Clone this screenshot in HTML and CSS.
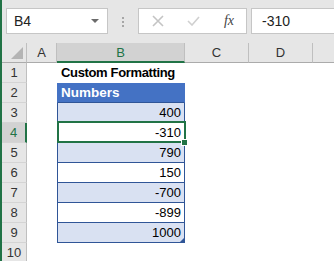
FILE: index.html
```html
<!DOCTYPE html>
<html lang="en">
<head>
  <meta charset="UTF-8">
  <title>Custom Formatting</title>
  <link rel="stylesheet" href="styles.css">
</head>
<body>
  <div class="formula-bar">
    <div class="name-box">
      <span>B4</span>
      <svg class="drop" width="8" height="5" viewBox="0 0 8 5"><path d="M0 0H8L4 4Z" fill="#6b6b6b"/></svg>
    </div>
    <div class="grip"><i></i><i></i><i></i></div>
    <div class="func-box">
      <svg width="12" height="12" viewBox="0 0 12 12"><path d="M1 1L11 11M11 1L1 11" stroke="#c4c4c4" stroke-width="1.6"/></svg>
      <svg width="13" height="10" viewBox="0 0 13 10"><path d="M1 5L5 9L12 1" stroke="#d0d0d0" stroke-width="1.6" fill="none"/></svg>
      <span class="fx">fx</span>
    </div>
    <div class="value-box">-310</div>
  </div>

  <div class="sheet">
    <div class="corner"><span class="tri"></span></div>
    <div class="col-head">A</div>
    <div class="col-head active">B</div>
    <div class="col-head">C</div>
    <div class="col-head">D</div>
    <div class="col-head last"></div>

    <div class="row-head">1</div>
    <div class="cell"></div>
    <div class="cell title">Custom Formatting</div>
    <div class="cell"></div><div class="cell"></div><div class="cell"></div>

    <div class="row-head">2</div>
    <div class="cell"></div>
    <div class="cell tbl head">Numbers</div>
    <div class="cell"></div><div class="cell"></div><div class="cell"></div>

    <div class="row-head">3</div>
    <div class="cell"></div>
    <div class="cell tbl band">400</div>
    <div class="cell"></div><div class="cell"></div><div class="cell"></div>

    <div class="row-head active">4</div>
    <div class="cell"></div>
    <div class="cell tbl selected">-310<span class="handle"></span></div>
    <div class="cell"></div><div class="cell"></div><div class="cell"></div>

    <div class="row-head">5</div>
    <div class="cell"></div>
    <div class="cell tbl band">790</div>
    <div class="cell"></div><div class="cell"></div><div class="cell"></div>

    <div class="row-head">6</div>
    <div class="cell"></div>
    <div class="cell tbl">150</div>
    <div class="cell"></div><div class="cell"></div><div class="cell"></div>

    <div class="row-head">7</div>
    <div class="cell"></div>
    <div class="cell tbl band">-700</div>
    <div class="cell"></div><div class="cell"></div><div class="cell"></div>

    <div class="row-head">8</div>
    <div class="cell"></div>
    <div class="cell tbl">-899</div>
    <div class="cell"></div><div class="cell"></div><div class="cell"></div>

    <div class="row-head">9</div>
    <div class="cell"></div>
    <div class="cell tbl band end">1000<span class="resize"></span></div>
    <div class="cell"></div><div class="cell"></div><div class="cell"></div>

    <div class="row-head">10</div>
    <div class="cell"></div><div class="cell"></div>
    <div class="cell"></div><div class="cell"></div><div class="cell"></div>
  </div>
</body>
</html>
```

FILE: styles.css
```css
body {
  margin: 0;
  width: 332px;
  height: 261px;
  overflow: hidden;
  border-left: 2px solid #217346;
  background-color: #fff;
  font-family: "Liberation Sans", Arial, sans-serif;
  font-size: 13px;
  color: #000;
}
.formula-bar {
  display: flex;
  align-items: flex-start;
  height: 43px;
  box-sizing: border-box;
  padding: 8px 0 0 4px;
  background-color: #e6e6e6;
}
.name-box {
  display: flex;
  align-items: center;
  justify-content: space-between;
  width: 102px;
  height: 26px;
  box-sizing: border-box;
  padding: 0 8px 0 7px;
  background: #fff;
  border: 1px solid #c6c6c6;
  font-size: 14px;
  color: #222;
}
.grip {
  display: flex;
  flex-direction: column;
  gap: 2px;
  width: 2px;
  margin: 9px 14px 0 14px;
}
.grip i {
  width: 2px;
  height: 2px;
  background: #a6a6a6;
}
.func-box {
  display: flex;
  align-items: center;
  justify-content: space-between;
  width: 109px;
  height: 26px;
  box-sizing: border-box;
  padding: 0 12px 0 13px;
  background: #fff;
  border: 1px solid #c6c6c6;
}
.fx {
  font-family: "Liberation Serif", serif;
  font-style: italic;
  font-size: 14px;
  color: #444;
}
.value-box {
  flex: 1;
  height: 26px;
  box-sizing: border-box;
  margin-left: 4px;
  padding: 4px 0 0 10px;
  background: #fff;
  border: 1px solid #c6c6c6;
  border-right: none;
  font-size: 14px;
  color: #222;
}
.sheet {
  display: grid;
  grid-template-columns: 25px 30px 128px 64px 64px 21px;
  grid-auto-rows: 20px;
  line-height: 20px;
}
.corner {
  position: relative;
  background: #e6e6e6;
  border-right: 1px solid #bfbfbf;
  border-bottom: 1px solid #ababab;
}
.tri {
  position: absolute;
  right: 3px;
  bottom: 3px;
  border-style: solid;
  border-width: 0 0 12px 12px;
  border-color: transparent transparent #b4b4b4 transparent;
}
.col-head {
  background: #e6e6e6;
  border-right: 1px solid #bfbfbf;
  border-bottom: 1px solid #ababab;
  text-align: center;
  color: #333;
}
.col-head.active {
  background: #d2d2d2;
  color: #217346;
  border-bottom: 2px solid #217346;
}
.col-head.last {
  border-right: none;
}
.row-head {
  background: #e6e6e6;
  border-right: 1px solid #bfbfbf;
  border-bottom: 1px solid #d4d4d4;
  text-align: center;
  color: #333;
  line-height: 20px;
}
.row-head.active {
  background: #d2d2d2;
  color: #217346;
  border-right: 2px solid #217346;
}
.cell {
  position: relative;
  padding: 0 3px;
  white-space: nowrap;
}
.title {
  font-weight: bold;
  padding-left: 4px;
  letter-spacing: -0.35px;
}
.tbl {
  text-align: right;
  border-left: 1px solid #2f5597;
  border-right: 1px solid #2f5597;
  border-bottom: 1px solid #2f5597;
}
.tbl.head {
  text-align: left;
  background: #4472c4;
  color: #fff;
  font-weight: bold;
  font-size: 13.5px;
  border-color: #4472c4;
  border-bottom-color: #2f5597;
}
.band {
  background: #d9e1f2;
}
.selected::after {
  content: "";
  position: absolute;
  left: -1px;
  right: -2px;
  top: -2px;
  bottom: -1px;
  border: 2px solid #217346;
}
.handle {
  position: absolute;
  right: -4px;
  bottom: -4px;
  width: 5px;
  height: 5px;
  background: #217346;
  border: 1px solid #fff;
  z-index: 1;
}
.resize {
  position: absolute;
  right: 0;
  bottom: 0;
  border-style: solid;
  border-width: 0 0 4px 4px;
  border-color: transparent transparent #2f5597 transparent;
}
```
